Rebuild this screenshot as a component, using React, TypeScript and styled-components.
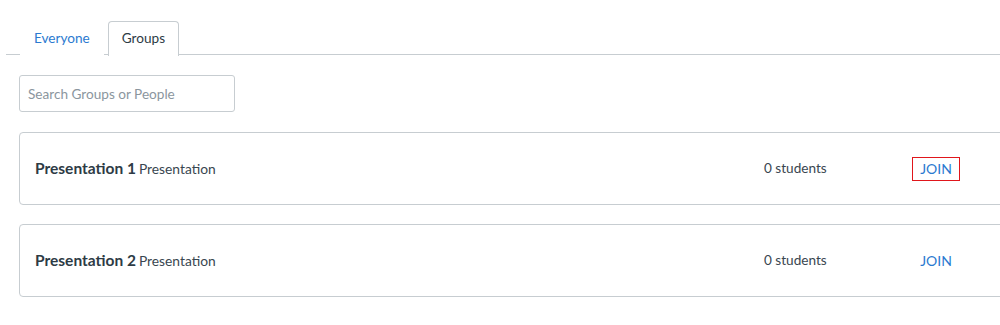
import React from "react";
import styled, { createGlobalStyle } from "styled-components";

const Global = createGlobalStyle`
  html, body { margin: 0; padding: 0; background: #fff; overflow: hidden; }
  body { font-family: Lato, "Open Sans", sans-serif; color: #2d3b45; }
  * { box-sizing: border-box; }
`;

const Page = styled.div`
  width: 1000px;
  padding: 21px 0 0 6px;
`;

const TabList = styled.div`
  display: flex;
  gap: 4px;
  padding-left: 14px;
  border-bottom: 1px solid #c7cdd1;
  height: 34px;
`;

const Tab = styled.div<{ $active?: boolean }>`
  height: 34px;
  padding: 0 13px 2px;
  display: flex;
  align-items: center;
  font-size: 13.6px;
  color: ${(p) => (p.$active ? "#2d3b45" : "#2b7ad0")};
  background: #fff;
  border: 1px solid ${(p) => (p.$active ? "#c7cdd1" : "transparent")};
  border-bottom: none;
  border-radius: 4px 4px 0 0;
  ${(p) => (p.$active ? "height: 35px;" : "")}
`;

const Content = styled.div`
  padding: 20px 0 0 13px;
  display: flex;
  flex-direction: column;
`;

const Search = styled.input`
  width: 216px;
  height: 37px;
  border: 1px solid #c7cdd1;
  border-radius: 3px;
  padding: 0 8px;
  font-family: Lato, sans-serif;
  font-size: 13.6px;
  color: #2d3b45;
  outline: none;
  &::placeholder { color: #8b969e; }
`;

const List = styled.div`
  margin-top: 20px;
  display: flex;
  flex-direction: column;
  gap: 19px;
`;

const Card = styled.div`
  width: 1000px;
  height: 73px;
  border: 1px solid #c7cdd1;
  border-radius: 4px;
  padding: 0 0 1px 15px;
  display: grid;
  grid-template-columns: 1fr 148px 106px;
  align-items: center;
`;

const Title = styled.div`
  display: flex;
  align-items: baseline;
  gap: 3px;
`;

const Name = styled.span`
  font-size: 15.5px;
  font-weight: 700;
  color: #2d3b45;
`;

const Kind = styled.span`
  font-size: 13.8px;
  color: #394650;
`;

const Count = styled.span`
  font-size: 13.6px;
  color: #394650;
`;

const Join = styled.button<{ $focused?: boolean }>`
  width: 48px;
  height: 24px;
  padding: 0;
  margin-top: 1px;
  background: none;
  border: 1px solid ${(p) => (p.$focused ? "#e0161b" : "transparent")};
  font-family: Lato, sans-serif;
  font-size: 14px;
  color: #2b7ad0;
  display: flex;
  align-items: center;
  justify-content: center;
  cursor: pointer;
`;

const groups = [
  { name: "Presentation 1", focused: true },
  { name: "Presentation 2", focused: false },
];

export default function App() {
  return (
    <>
      <Global />
      <Page>
        <TabList>
          <Tab>Everyone</Tab>
          <Tab $active>Groups</Tab>
        </TabList>
        <Content>
          <Search placeholder="Search Groups or People" />
          <List>
            {groups.map((g) => (
              <Card key={g.name}>
                <Title>
                  <Name>{g.name}</Name>
                  <Kind>Presentation</Kind>
                </Title>
                <Count>0 students</Count>
                <Join $focused={g.focused}>JOIN</Join>
              </Card>
            ))}
          </List>
        </Content>
      </Page>
    </>
  );
}
